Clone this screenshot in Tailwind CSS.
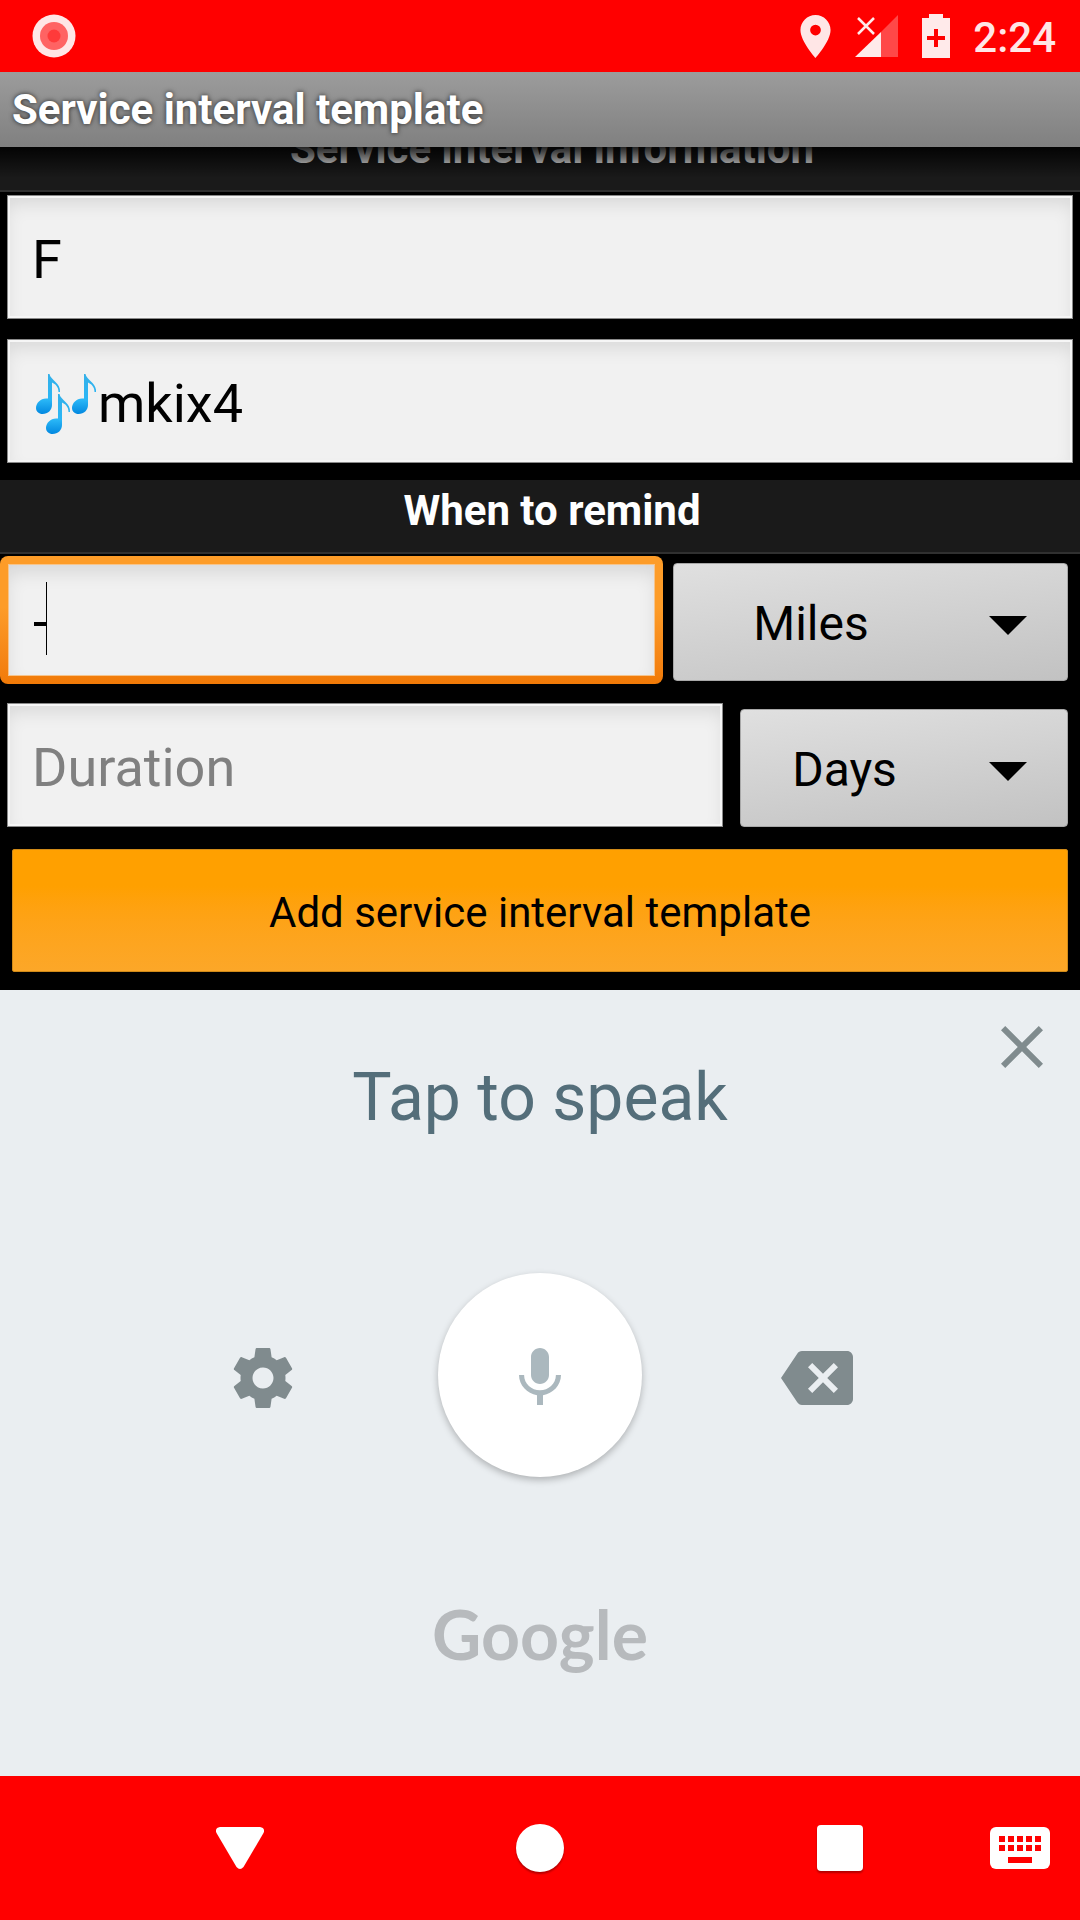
<!DOCTYPE html>
<html lang="en">
<head>
<meta charset="utf-8">
<meta name="viewport" content="width=device-width, initial-scale=1">
<title>Service interval template</title>
<script src="https://cdn.jsdelivr.net/npm/@tailwindcss/browser@4"></script>
</head>
<body class="flex min-h-screen flex-col bg-black font-['Roboto',sans-serif] text-black">

<!-- Status bar -->
<header class="flex h-[72px] shrink-0 items-center bg-[#ff0000] pr-6 pl-8 text-[#ffe6e6]">
  <svg class="size-11" viewBox="0 0 44 44" aria-hidden="true">
    <circle cx="22" cy="22" r="21.5" fill="#ffe6e6"/><circle cx="22" cy="22" r="14" fill="#ff6363"/><circle cx="22" cy="22" r="6.5" fill="#ff3a3a"/>
  </svg>
  <div class="ml-auto flex items-center gap-[23px]">
    <svg class="h-[43px] w-[31px]" viewBox="5 2 14 20" fill="currentColor" aria-label="Location"><path d="M12 2C8.130 2 5 5.130 5 9c0 5.250 7 13 7 13s7-7.750 7-13c0-3.870-3.130-7-7-7zm0 9.500a2.500 2.500 0 1 1 0-5 2.500 2.500 0 0 1 0 5z"/></svg>
    <svg class="h-11 w-[45px]" viewBox="0 0 45 44" aria-label="No signal"><path d="M27 18 44 1v42H27z" fill="#ff4848"/><path d="M1 43 27 18V43z" fill="#ffeaea"/><path d="m4 4 16 16M20 4 4 20" stroke="#ffeaea" stroke-width="2.500"/></svg>
    <svg class="h-11 w-7" viewBox="0 0 28 44" aria-label="Charging"><path fill="#ffeaea" fill-rule="evenodd" d="M7 0h14v4h7v40H0V4h7zM12 15v7H5v4h7v7h4v-7h7v-4h-7v-7z"/></svg>
    <time class="pt-[3px] text-[42px] leading-[48px] font-medium">2:24</time>
  </div>
</header>

<!-- Title bar -->
<div class="flex h-[75px] shrink-0 items-center bg-linear-to-b from-[#9c9c9c] to-[#808080] px-3">
  <h1 class="text-[42px] leading-[50px] font-bold text-white text-shadow-[0_0_5px_rgb(0_0_0/0.75)]">Service interval template</h1>
</div>

<main class="shrink-0 overflow-hidden pb-[18px]">
  <!-- Scrolled partly under the title bar -->
  <div class="relative -mt-[29px] h-[74px] border-b-2 border-[#303030] bg-[#1a1a1a] pt-[6px] pl-6">
    <h2 class="text-center text-[42px] leading-[50px] font-bold text-white">Service interval information</h2>
    <div class="absolute inset-x-0 top-0 h-[60px] bg-linear-to-b from-black from-40% to-transparent"></div>
  </div>

  <form>
    <div class="flex flex-col gap-5 px-[7px] pt-[3px] pb-[17px]">
      <input aria-label="Name" value="F" class="h-[124px] w-full border border-[#8a8a8a] bg-[#f1f1f1] px-6 pt-1 text-[54px] shadow-[inset_0_0_0_2px_#f6f6f6,inset_0_10px_20px_-4px_rgb(0_0_0/0.12)]">
      <div class="relative">
        <input aria-label="Description" value="mkix4" class="h-[124px] w-full border border-[#8a8a8a] bg-[#f1f1f1] pr-6 pl-[90px] pt-1 text-[54px] shadow-[inset_0_0_0_2px_#f6f6f6,inset_0_10px_20px_-4px_rgb(0_0_0/0.12)]">
        <svg class="absolute top-[35px] left-[29px] h-[60px] w-[60px]" viewBox="0 0 60 60" aria-label="Musical notes">
          <defs>
            <linearGradient id="note" x1="0" y1="0" x2="0" y2="1"><stop offset="0" stop-color="#35b0e8"/><stop offset=".65" stop-color="#29b6f6"/><stop offset="1" stop-color="#0288e0"/></linearGradient>
            <path id="n" d="M12 0h1.500c1 6 11.500 9 10.500 18h-1.500c0-5-3-8-6.500-9.500V31c0 5-4 9-9.500 9C3 40 0 37.500 0 34c0-5 4.500-9.500 10-9.500h2z"/>
          </defs>
          <use href="#n" fill="url(#note)"/><use href="#n" x="36" fill="url(#note)"/><use href="#n" x="10" y="20" fill="url(#note)"/>
        </svg>
      </div>
    </div>

    <div class="h-[74px] border-b-2 border-[#303030] bg-[#1a1a1a] pl-6">
      <h2 class="pt-[6px] text-center text-[42px] leading-[50px] font-bold text-white">When to remind</h2>
    </div>

    <div class="flex items-center gap-[10px] pt-[2px] pr-3">
      <div class="relative min-w-0 flex-1 rounded-lg bg-linear-to-b from-[#fd9c28] from-40% to-[#f17a07] p-2">
        <input aria-label="Distance" value="-" class="block h-28 w-full border border-[#f6c48c] bg-[#f1f1f1] px-6 pt-0.5 text-[54px] shadow-[inset_0_10px_20px_-4px_rgb(0_0_0/0.12)] outline-none">
        <span class="absolute top-[26px] left-[46px] h-[73px] w-px bg-black"></span>
      </div>
      <div class="relative w-[395px] pt-1">
        <select aria-label="Distance unit" class="h-[118px] w-full appearance-none rounded-sm border border-[#a8a8a8] bg-linear-[172deg] from-[#e0e0e0] to-[#c2c2c2] pt-[3px] pr-[119px] text-center text-[48px] [text-align-last:center]"><option>Miles</option><option>Kilometers</option></select>
        <svg class="pointer-events-none absolute top-[57px] right-[41px] h-[19px] w-[38px]" viewBox="0 0 38 19" aria-hidden="true"><path d="M0 0h38L19 19z"/></svg>
      </div>
    </div>

    <div class="flex items-center gap-[17px] pt-[19px] pr-3 pl-[7px]">
      <input aria-label="Duration" placeholder="Duration" class="h-[124px] min-w-0 flex-1 border border-[#8a8a8a] bg-[#f1f1f1] px-6 pt-1 text-[54px] shadow-[inset_0_0_0_2px_#f6f6f6,inset_0_10px_20px_-4px_rgb(0_0_0/0.12)] placeholder:text-[#808080]">
      <div class="relative w-[328px] pt-[6px]">
        <select aria-label="Duration unit" class="h-[118px] w-full appearance-none rounded-sm border border-[#a8a8a8] bg-linear-[172deg] from-[#e0e0e0] to-[#c2c2c2] pt-[3px] pr-[119px] text-center text-[48px] [text-align-last:center]"><option>Days</option><option>Months</option></select>
        <svg class="pointer-events-none absolute top-[59px] right-[41px] h-[19px] w-[38px]" viewBox="0 0 38 19" aria-hidden="true"><path d="M0 0h38L19 19z"/></svg>
      </div>
    </div>

    <div class="px-3 pt-[22px]">
      <button type="button" class="block h-[123px] w-full rounded-xs border border-[#d08a18] bg-linear-to-b from-[#ffa000] from-30% to-[#fca728] pt-1 text-[42px] leading-[50px]">Add service interval template</button>
    </div>
  </form>
</main>

<!-- Voice input panel -->
<section aria-label="Voice input" class="relative flex flex-1 flex-col items-center bg-[#eaeef1] pt-[68px] text-[#808b8e]">
  <button aria-label="Close" class="absolute top-[21px] right-[22px]">
    <svg class="size-[72px]" viewBox="0 0 24 24" fill="currentColor"><path d="M19 6.410 17.590 5 12 10.590 6.410 5 5 6.410 10.590 12 5 17.590 6.410 19 12 13.410 17.590 19 19 17.590 13.410 12z"/></svg>
  </button>
  <p class="text-[66px] leading-[80px] text-[#546e7a]">Tap to speak</p>
  <div class="mt-[135px] flex items-center gap-[139px]">
    <button aria-label="Settings" class="pt-1.5">
      <svg class="size-[72px]" viewBox="0 0 24 24" fill="currentColor"><path d="M19.430 12.980c.04-.32.07-.64.07-.98s-.03-.66-.07-.98l2.110-1.650c.19-.15.24-.42.12-.64l-2-3.460c-.12-.22-.39-.3-.61-.22l-2.490 1c-.52-.4-1.080-.73-1.690-.98l-.38-2.650C14.460 2.180 14.250 2 14 2h-4c-.25 0-.46.18-.49.42l-.38 2.650c-.61.25-1.170.59-1.690.98l-2.490-1c-.23-.09-.49 0-.61.22l-2 3.460c-.13.22-.07.49.12.64l2.110 1.650c-.04.32-.07.65-.07.98s.03.66.07.98l-2.110 1.650c-.19.15-.24.42-.12.64l2 3.460c.12.22.39.3.61.22l2.490-1c.52.4 1.080.73 1.690.98l.38 2.650c.03.24.24.42.49.42h4c.25 0 .46-.18.49-.42l.38-2.650c.61-.25 1.170-.59 1.690-.98l2.490 1c.23.09.49 0 .61-.22l2-3.460c.12-.22.07-.49-.12-.64l-2.110-1.650zM12 15.500c-1.930 0-3.500-1.570-3.500-3.500s1.570-3.500 3.500-3.500 3.500 1.570 3.500 3.500-1.570 3.500-3.500 3.500z"/></svg>
    </button>
    <button aria-label="Speak" class="flex size-[204px] items-center justify-center rounded-full bg-white pt-1.5 text-[#abb8be] shadow-[0_3px_7px_rgb(0_0_0/0.25)]">
      <svg class="size-[72px]" viewBox="0 0 24 24" fill="currentColor"><path d="M12 14c1.660 0 3-1.340 3-3V5c0-1.660-1.340-3-3-3S9 3.340 9 5v6c0 1.660 1.340 3 3 3zm5.300-3c0 3-2.540 5.100-5.300 5.100S6.700 14 6.700 11H5c0 3.410 2.720 6.230 6 6.720V21h2v-3.280c3.280-.48 6-3.300 6-6.720h-1.700z"/></svg>
    </button>
    <button aria-label="Backspace" class="pt-1.5">
      <svg class="size-[72px]" viewBox="0 0 24 24" fill="currentColor"><path d="M22 3H7c-.69 0-1.230.35-1.590.88L0 12l5.410 8.110c.36.53.9.89 1.590.89h15c1.100 0 2-.9 2-2V5c0-1.100-.9-2-2-2zm-3 12.590L17.590 17 14 13.410 10.410 17 9 15.590 12.590 12 9 8.410 10.410 7 14 10.590 17.590 7 19 8.410 15.410 12 19 15.590z"/></svg>
    </button>
  </div>
  <p class="mt-[117px] font-['Lato',sans-serif] text-[68px] leading-[80px] font-bold text-[#b7babd]">Google</p>
</section>

<!-- Navigation bar -->
<nav class="flex h-36 shrink-0 items-center bg-[#ff0000] pr-[30px] pl-[90px] text-white">
  <button aria-label="Back" class="flex flex-1 justify-center"><svg class="h-[42px] w-12" viewBox="0 0 48 42" fill="currentColor"><path d="M4 0h40q5.500 1 3.500 6L27.500 40q-3.500 4-7 0L.5 6Q-1.500 1 4 0z"/></svg></button>
  <button aria-label="Home" class="flex flex-1 justify-center"><span class="size-12 rounded-full bg-white shadow-[0_2px_2px_rgb(0_0_0/0.3)]"></span></button>
  <button aria-label="Recent apps" class="flex flex-1 justify-center"><span class="size-[46px] rounded-sm bg-white shadow-[0_2px_2px_rgb(0_0_0/0.3)]"></span></button>
  <button aria-label="Switch keyboard"><svg class="h-[42px] w-[60px]" viewBox="0 0 20 14"><rect width="20" height="14" rx="2" fill="#fff"/><path fill="#f00" d="M3 3h2v2H3zm3 0h2v2H6zm3 0h2v2H9zm3 0h2v2h-2zm3 0h2v2h-2zM3 6h2v2H3zm3 0h2v2H6zm3 0h2v2H9zm3 0h2v2h-2zm3 0h2v2h-2zM6 10h8v2H6z"/></svg></button>
</nav>
</body>
</html>
